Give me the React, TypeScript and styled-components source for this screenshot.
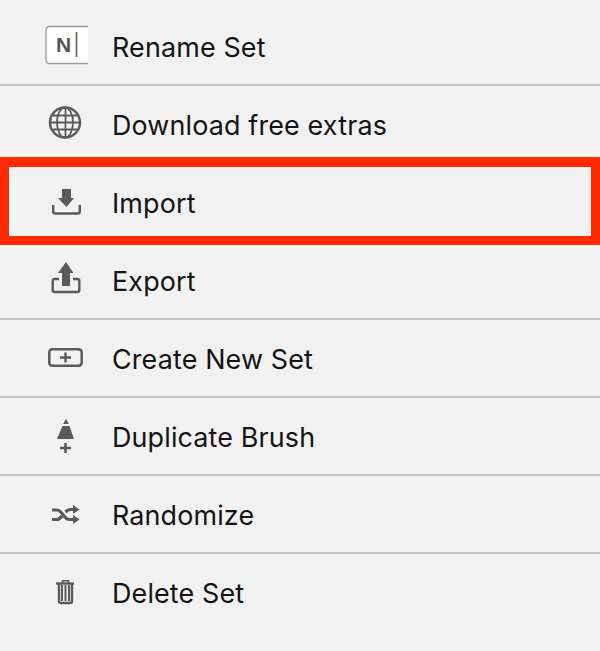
import React from "react";
import styled, { createGlobalStyle } from "styled-components";

const Global = createGlobalStyle`
  html, body { margin: 0; padding: 0; background: #f1f1f1; }
  body { width: 600px; height: 651px; overflow: hidden; font-family: Inter, "Liberation Sans", sans-serif; }
`;

const Panel = styled.div`
  position: relative;
  width: 600px;
  height: 651px;
  background: #f1f1f1;
`;

const Menu = styled.ul`
  list-style: none;
  margin: 0;
  padding: 8px 0 0;
`;

const Row = styled.li`
  display: flex;
  align-items: center;
  height: 76px;
  padding-left: 45px;
  border-bottom: 2px solid #c4c4c4;
  &:last-child { border-bottom: none; }
`;

const IconSlot = styled.span`
  display: flex;
  align-items: center;
  justify-content: center;
  width: 43px;
  height: 44px;
  margin-right: 24px;
  color: #5a5a5a;
`;

const Label = styled.span`
  font-size: 26.9px;
  font-weight: 400;
  letter-spacing: 0.15px;
  color: #141414;
  line-height: 32px;
  padding-top: 1px;
`;

const Highlight = styled.div`
  position: absolute;
  left: 0;
  top: 157px;
  width: 600px;
  height: 88px;
  box-sizing: border-box;
  border-style: solid;
  border-color: #ff2a00;
  border-width: 10px 9px 9px 9px;
  pointer-events: none;
`;

const CursorN = styled.text`
  font-family: "Liberation Sans", Arial, sans-serif;
  font-size: 21px;
  font-weight: 700;
  fill: #555555;
  stroke: none;
`;

const Svg: React.FC<{ children: React.ReactNode }> = ({ children }) => (
  <svg width="43" height="44" viewBox="0 0 43 44" fill="none" stroke="currentColor" strokeWidth="2" aria-hidden>
    {children}
  </svg>
);

const RenameIcon = () => (
  <Svg>
    <path d="M43 2.500H4.500a3.500 3.500 0 0 0-3.500 3.500v30a3.500 3.500 0 0 0 3.500 3.500H43V2.500Z" fill="#fff" stroke="none" />
    <path d="M43 2.500H4.500a3.500 3.500 0 0 0-3.500 3.500v30a3.500 3.500 0 0 0 3.500 3.500H43" stroke="#9a9a9a" strokeWidth="1.3" />
    <CursorN x="11" y="28">N</CursorN>
    <path d="M31.500 8v25" strokeWidth="1.600" />
  </Svg>
);

const GlobeIcon = () => (
  <Svg>
    <circle cx="20" cy="20.500" r="15" strokeWidth="2.400" />
    <ellipse cx="20" cy="20.500" rx="8" ry="15" strokeWidth="1.800" />
    <path d="M20.500 6v29M5.500 20.500h29M8 13.500h24M8 27.500h24" strokeWidth="1.800" />
  </Svg>
);

const ImportIcon = () => (
  <Svg>
    <path d="M8.200 25v6.500a2 2 0 0 0 2 2h22.600a2 2 0 0 0 2-2V25" strokeWidth="2.400" />
    <path d="M17 9h9v9h3L21.500 27 13 18h4Z" fill="currentColor" stroke="none" />
  </Svg>
);

const ExportIcon = () => (
  <Svg>
    <path d="M14 21h-4.300a2 2 0 0 0-2 2v9a2 2 0 0 0 2 2h22.600a2 2 0 0 0 2-2v-9a2 2 0 0 0-2-2H28" strokeWidth="2.400" />
    <path d="M21 4l7.500 11H25v13h-8V15h-4Z" fill="currentColor" stroke="none" />
  </Svg>
);

const NewSetIcon = () => (
  <Svg>
    <rect x="4.300" y="13.300" width="32.400" height="16.400" rx="3" strokeWidth="2.500" />
    <path d="M20.500 16.500v10M15 21.500h11" strokeWidth="2.400" />
  </Svg>
);

const DuplicateIcon = () => (
  <Svg>
    <path d="M21 5l3 5h-6Z" fill="currentColor" stroke="none" />
    <path d="M17.500 12h7l4.500 13H12Z" fill="currentColor" stroke="none" />
    <path d="M20.500 29v10M15 34h11" strokeWidth="2.500" />
  </Svg>
);

const ShuffleIcon = () => (
  <Svg>
    <path d="M7 18h5c5 0 7 9.500 12 9.500h5" strokeWidth="3.200" />
    <path d="M7 27.500h5c2 0 3.500-1.500 5-3.500M20.500 20c1.500-1.500 3-2.500 5-2.500H29" strokeWidth="3.200" />
    <path d="M28 13l6.500 4.500L28 22ZM28 23l6.500 4.500L28 32Z" fill="currentColor" stroke="none" />
  </Svg>
);

const TrashIcon = () => (
  <Svg>
    <path d="M11 13.500h18" strokeWidth="2.400" />
    <path d="M17.500 13v-2.200h6V13" strokeWidth="1.600" />
    <path d="M14 14v17a2 2 0 0 0 2 2h9a2 2 0 0 0 2-2V14" strokeWidth="2.400" />
    <path d="M17 15v16M20.500 15v16M24 15v16" strokeWidth="2" />
  </Svg>
);

const items: { label: string; icon: React.ReactNode }[] = [
  { label: "Rename Set", icon: <RenameIcon /> },
  { label: "Download free extras", icon: <GlobeIcon /> },
  { label: "Import", icon: <ImportIcon /> },
  { label: "Export", icon: <ExportIcon /> },
  { label: "Create New Set", icon: <NewSetIcon /> },
  { label: "Duplicate Brush", icon: <DuplicateIcon /> },
  { label: "Randomize", icon: <ShuffleIcon /> },
  { label: "Delete Set", icon: <TrashIcon /> },
];

export default function App() {
  return (
    <>
      <Global />
      <Panel>
        <Menu>
          {items.map((item) => (
            <Row key={item.label}>
              <IconSlot>{item.icon}</IconSlot>
              <Label>{item.label}</Label>
            </Row>
          ))}
        </Menu>
        <Highlight />
      </Panel>
    </>
  );
}
